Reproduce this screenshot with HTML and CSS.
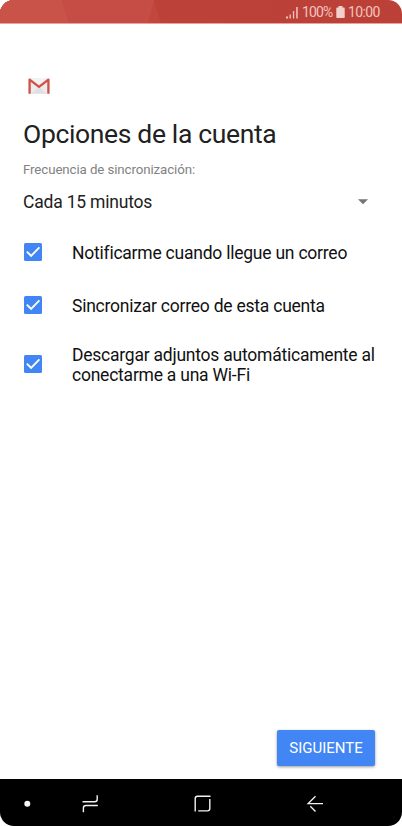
FILE: index.html
```html
<!DOCTYPE html>
<html lang="es">
<head>
<meta charset="utf-8">
<title>Opciones de la cuenta</title>
<link rel="stylesheet" href="styles.css">
</head>
<body>
<div class="screen">
  <header class="status">
    <svg class="signal" width="12" height="13" viewBox="0 0 12 13" fill="#f3c4bf"><path d="M0 10.500h2V12.500H0zM3.500 8.500h1.300v4H3.500zM6.900 5h1.300v7.500H6.900zM10.200 1h1.500v11.500h-1.500z"/></svg>
    <span class="battery-text">100%</span>
    <svg class="battery" width="9" height="13" viewBox="0 0 9 13" fill="#f3d0cc"><path d="M2.500 0h4v1.500H8q.700 0 .700.700v9.100q0 .700-.700.700H1q-.700 0-.700-.700V2.200q0-.700.700-.700h1.500z"/></svg>
    <span class="clock">10:00</span>
  </header>
  <main class="content">
    <svg class="gmail" width="22" height="16" viewBox="0 0 22 16">
      <rect x=".5" y=".3" width="21" height="15.400" rx="1" fill="#ececec"/>
      <path d="M3 15.700 11 9l8 6.700z" fill="#e0e0e0"/>
      <path d="M3 .300h16L11 6.500z" fill="#f3f3f3"/>
      <path d="M1.600 15.700V1.700L11 8.800l9.400-7.100v14" fill="none" stroke="#d3504a" stroke-width="2.300" stroke-linejoin="round"/>
    </svg>
    <h1 class="title">Opciones de la cuenta</h1>
    <p class="label">Frecuencia de sincronización:</p>
    <div class="select">
      <span class="value">Cada 15 minutos</span>
      <svg class="caret" width="10" height="6" viewBox="0 0 10 6"><path d="M0 .300h10L5 5.300z" fill="#757575"/></svg>
    </div>
    <ul class="options">
      <li class="option">
        <svg class="check" width="18" height="18" viewBox="0 0 18 18"><rect width="18" height="18" rx="1.500" fill="#4285f4"/><path d="m2.800 8.600 4.300 4.200 8.300-8.400" fill="none" stroke="#fff" stroke-width="1.900"/></svg>
        <span class="text">Notificarme cuando llegue un correo</span>
      </li>
      <li class="option">
        <svg class="check" width="18" height="18" viewBox="0 0 18 18"><rect width="18" height="18" rx="1.500" fill="#4285f4"/><path d="m2.800 8.600 4.300 4.200 8.300-8.400" fill="none" stroke="#fff" stroke-width="1.900"/></svg>
        <span class="text">Sincronizar correo de esta cuenta</span>
      </li>
      <li class="option tall">
        <svg class="check" width="18" height="18" viewBox="0 0 18 18"><rect width="18" height="18" rx="1.500" fill="#4285f4"/><path d="m2.800 8.600 4.300 4.200 8.300-8.400" fill="none" stroke="#fff" stroke-width="1.900"/></svg>
        <span class="text">Descargar adjuntos automáticamente al<br>conectarme a una Wi-Fi</span>
      </li>
    </ul>
    <button class="next" type="button">SIGUIENTE</button>
  </main>
  <nav class="navbar">
    <svg width="402" height="47" viewBox="0 0 402 47" fill="none" stroke="#f2f2f2" stroke-width="1.400">
      <circle cx="27.300" cy="24.700" r="3" fill="#f5f5f5" stroke="none"/>
      <path d="M82.500 22.700h12.200q2.500 0 2.500-2.500v-4M97.800 26.500H86q-2.600 0-2.600 2.500v4.300"/>
      <path d="M210.500 17.300h-13q-2.300 0-2.300 2.300v13M198.200 31.900h9.300q2.300 0 2.300-2.300v-9.700"/>
      <path d="M323 24.600h-14.800l7.300-7.400M310.300 27.300l5.200 5.100"/>
    </svg>
  </nav>
</div>
</body>
</html>
```
FILE: styles.css
```css
* { box-sizing: border-box; }
body { margin: 0; background: #fff; font-family: Roboto, sans-serif; }
.screen { width: 402px; height: 826px; display: flex; flex-direction: column; overflow: hidden; }
.status {
  height: 24px; flex: none; display: flex; align-items: center;
  padding: 1px 22px 0 286px;
  border-radius: 14px 14px 0 0;
  border-bottom: 1px solid #e9a39d;
  background:
    linear-gradient(73deg, #c95249 65px, transparent 66px),
    linear-gradient(107deg, #c64d45 147px, transparent 148px),
    linear-gradient(73deg, #c2483f 153px, transparent 154px),
    linear-gradient(90deg, #bd4239, #bb4037);
  color: #f3c4bf; font-size: 14px; line-height: 22px; white-space: nowrap;
}
.signal { margin-right: 4px; flex: none; }
.battery-text { width: 30px; letter-spacing: -0.9px; }
.battery { margin: 0 3px 0 4px; flex: none; }
.clock { letter-spacing: -0.6px; }
.content { flex: 1; display: flex; flex-direction: column; padding: 54px 27px 0 24px; }
.gmail { margin-left: 4px; flex: none; }
.title { margin: 24px 0 0 -1px; font-size: 26.5px; line-height: 32px; font-weight: 400; letter-spacing: -0.35px; color: #212121; white-space: nowrap; }
.label { margin: 11px 0 0 -1px; font-size: 13.3px; line-height: 17px; letter-spacing: -0.1px; color: #828282; }
.select { height: 28px; margin: 10px 0 0 -1px; display: flex; align-items: center; justify-content: space-between; padding-right: 7px; }
.value { font-size: 17.5px; letter-spacing: -0.2px; color: #212121; }
.options { list-style: none; margin: 9px 0 0; padding: 0; }
.option { height: 53px; display: flex; align-items: center; }
.tall { height: 65px; }
.check { flex: none; margin-right: 30px; }
.text { padding-top: 2px; font-size: 17.5px; line-height: 20px; letter-spacing: -0.23px; color: #111; white-space: nowrap; }
.next {
  margin: auto 0 13px; align-self: flex-end; width: 98px; height: 36px; padding: 0;
  border: 0; border-radius: 2px; background: #4285f4; color: #fff;
  font: 400 15px/37px Roboto, sans-serif; box-shadow: 0 1px 3px rgba(0,0,0,.4);
}
.navbar { height: 47px; flex: none; background: #000; border-radius: 0 0 14px 14px; }
.navbar svg { display: block; }
```
